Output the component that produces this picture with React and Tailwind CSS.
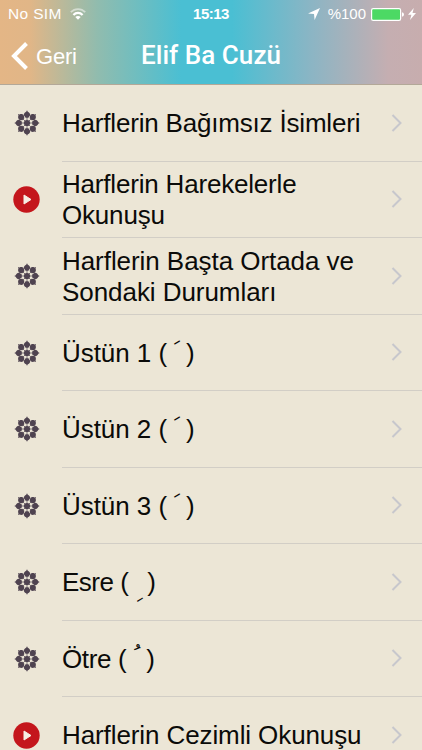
const lessons = [
  { title: 'Harflerin Bağımsız İsimleri', spacing: 'tracking-[-0.19px]' },
  { title: 'Harflerin Harekelerle Okunuşu', icon: 'play', spacing: 'tracking-[-0.19px]' },
  { title: 'Harflerin Başta Ortada ve Sondaki Durumları', spacing: 'tracking-[-0.06px]' },
  { title: 'Üstün 1', mark: '\u064E', spacing: 'tracking-[-0.05px]', gap: 'w-[19px]', shift: 'translate-x-[1px] -translate-y-[5px] -rotate-18' },
  { title: 'Üstün 2', mark: '\u064E', spacing: 'tracking-[-0.05px]', gap: 'w-[19px]', shift: 'translate-x-[1px] -translate-y-[5px] -rotate-18' },
  { title: 'Üstün 3', mark: '\u064E', spacing: 'tracking-[-0.05px]', gap: 'w-[19px]', shift: 'translate-x-[1px] -translate-y-[5px] -rotate-18' },
  { title: 'Esre', mark: '\u0650', spacing: 'tracking-[-0.5px]', gap: 'w-[19px]', shift: '-translate-x-[2px] translate-y-[8px] -rotate-18' },
  { title: 'Ötre', mark: '\u064F', spacing: 'tracking-[-0.35px]', gap: 'w-[20px]', shift: '-translate-x-[1px] -translate-y-[5px]' },
  { title: 'Harflerin Cezimli Okunuşu', icon: 'play', spacing: 'tracking-[-0.1px]' },
];

const petals = [0, 45, 90, 135, 180, 225, 270, 315];

function RosetteIcon() {
  return (
    <svg viewBox="-13 -13 26 26" className="h-[26px] w-[26px]" fill="#4f4350">
      <circle r="3.1" />
      {petals.map((angle) => (
        <g key={angle} transform={`rotate(${angle})`}>
          <path d="M0 -12.7 L0.8 -11.3 C2.6 -10.5 3.6 -9 3 -7.4 L1.4 -5.2 H-1.4 L-3 -7.4 C-3.6 -9 -2.6 -10.5 -0.8 -11.3 Z" />
          <path d="M0 -2.5 V-6" stroke="#4f4350" strokeWidth="0.7" />
        </g>
      ))}
    </svg>
  );
}

function PlayIcon() {
  return (
    <svg viewBox="0 0 27 27" className="h-[27px] w-[27px]">
      <circle cx="13.5" cy="13.5" r="13.2" fill="#c4161c" />
      <path d="M11 9 L18 13.5 L11 18 Z" fill="#f6eee4" stroke="#f6eee4" strokeWidth="1" strokeLinejoin="round" />
    </svg>
  );
}

function Chevron() {
  return (
    <svg viewBox="0 0 12 20" className="h-5 w-3" fill="none" stroke="#c7c7cc" strokeWidth="2">
      <path d="M1.5 2 L9.5 10 L1.5 18" />
    </svg>
  );
}

function StatusBar() {
  return (
    <div className="relative flex h-7 items-center justify-between pr-[6px] pl-2 text-[15px]">
      <div className="flex items-center gap-2">
        <span className="text-[15.5px] tracking-[0.35px]">No SIM</span>
        <svg viewBox="0 0 16 12" className="h-3 w-4" fill="none" stroke="white" strokeWidth="1.8">
          <path d="M0.8 4.2 C4.8 0 11.2 0 15.2 4.2" opacity="0.5" />
          <path d="M3.4 6.9 C6 4.2 10 4.2 12.6 6.9" strokeWidth="2.2" />
          <path d="M8 11.8 L5.3 9 C6.8 7.6 9.2 7.6 10.7 9 Z" fill="white" stroke="none" />
        </svg>
      </div>
      <span className="absolute inset-x-0 top-[3px] text-center text-[15px] font-bold tracking-[-0.5px]">15:13</span>
      <div className="flex items-center">
        <svg viewBox="0 0 12 12" className="mr-2 h-3 w-3" fill="white">
          <path d="M12 0 L6.6 12 L6 6 L0 5.4 Z" />
        </svg>
        <span className="mr-[5px]">%100</span>
        <svg viewBox="0 0 34 13" className="mr-[3px] h-[13px] w-[34px]">
          <rect x="0.6" y="0.6" width="29" height="11.8" rx="1.6" fill="#4cd964" stroke="white" strokeWidth="1.2" />
          <path d="M31 4.2 Q33 4.8 33 6.5 Q33 8.2 31 8.8 Z" fill="white" />
        </svg>
        <svg viewBox="0 0 8 12" className="h-3 w-2" fill="white">
          <path d="M5.8 0 L0 6.8 H3.4 L2 12 L8 5 H4.5 Z" />
        </svg>
      </div>
    </div>
  );
}

function Header() {
  return (
    <header className="h-[85px] shrink-0 border-b border-[#b3a898] bg-[linear-gradient(90deg,#e4b686_0%,#e1b687_7%,#91bcae_23%,#4abfd3_43%,#4abfd3_55%,#8cb5c4_74%,#c5aeb1_92%,#c7adae_100%)] text-white">
      <StatusBar />
      <div className="relative flex h-[56px] items-center pl-[11px]">
        <button className="flex items-center gap-[7px] text-[22px] tracking-[-0.2px]">
          <svg viewBox="0 0 18 28" className="h-7 w-[18px]" fill="none" stroke="white" strokeWidth="4">
            <path d="M15.5 1.5 L3 14 L15.5 26.5" />
          </svg>
          Geri
        </button>
        <h1 className="pointer-events-none absolute inset-x-0 top-[10px] text-center font-[Roboto,sans-serif] text-[26px] leading-[34px] font-medium tracking-[0.05px]">
          Elif Ba Cuzü
        </h1>
      </div>
    </header>
  );
}

function LessonRow({ lesson }) {
  return (
    <li className="flex h-[76.5px] shrink-0">
      <div className="flex w-[62px] shrink-0 items-center pl-[13px]">
        {lesson.icon === 'play' ? <PlayIcon /> : <span className="pl-[1px]"><RosetteIcon /></span>}
      </div>
      <div className="flex min-w-0 flex-1 items-center border-b border-[#d2cec6] pr-[19px]">
        <div className={`w-[310px] pt-[2px] text-[26px] leading-[31px] ${lesson.spacing}`}>
          {lesson.title}
          {lesson.mark && (
            <>
              {' ('}
              <span className={`inline-block text-center font-['DejaVu_Sans',sans-serif] text-[22px] leading-none ${lesson.gap} ${lesson.shift}`}>
                {'\u00A0' + lesson.mark}
              </span>
              {')'}
            </>
          )}
        </div>
        <span className="ml-auto"><Chevron /></span>
      </div>
    </li>
  );
}

export default function App() {
  return (
    <div className="flex h-[750px] w-[422px] flex-col overflow-hidden bg-[#ece6d6] font-['Liberation_Sans',Arial,sans-serif] text-[#0b0b09]">
      <Header />
      <ul className="flex flex-col">
        {lessons.map((lesson) => (
          <LessonRow key={lesson.title} lesson={lesson} />
        ))}
      </ul>
    </div>
  );
}
